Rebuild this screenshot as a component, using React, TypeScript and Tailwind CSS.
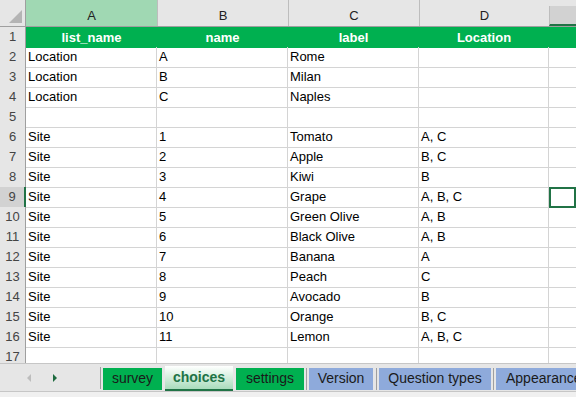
import React from 'react';

const rows: string[][] = [
  ['list_name', 'name', 'label', 'Location'],
  ['Location', 'A', 'Rome', ''],
  ['Location', 'B', 'Milan', ''],
  ['Location', 'C', 'Naples', ''],
  ['', '', '', ''],
  ['Site', '1', 'Tomato', 'A, C'],
  ['Site', '2', 'Apple', 'B, C'],
  ['Site', '3', 'Kiwi', 'B'],
  ['Site', '4', 'Grape', 'A, B, C'],
  ['Site', '5', 'Green Olive', 'A, B'],
  ['Site', '6', 'Black Olive', 'A, B'],
  ['Site', '7', 'Banana', 'A'],
  ['Site', '8', 'Peach', 'C'],
  ['Site', '9', 'Avocado', 'B'],
  ['Site', '10', 'Orange', 'B, C'],
  ['Site', '11', 'Lemon', 'A, B, C'],
  ['', '', '', ''],
];

const grid = 'grid grid-cols-[26px_131px_131px_131px_130px_1fr]';

function Tab({ label, tone, active, className }: { label: string; tone: 'green' | 'blue'; active?: boolean; className: string }) {
  if (active) {
    return (
      <div className={'flex h-[25px] shrink-0 items-center justify-center self-start whitespace-nowrap border-b-2 border-[#217346] bg-gradient-to-b from-white to-[#a9dcbc] text-[14px] font-bold text-[#217346] ' + className}>
        {label}
      </div>
    );
  }
  return (
    <div
      className={
        'flex h-[22px] shrink-0 items-center justify-center whitespace-nowrap text-[14px] text-[#1a1a1a] ' +
        (tone === 'green' ? 'bg-[#00b050] ' : 'bg-[#8eaadb] ') +
        className
      }
    >
      {label}
    </div>
  );
}

function Sep({ className }: { className: string }) {
  return <div className={'h-[22px] w-px shrink-0 bg-[#9f9f9f] ' + className} />;
}

export default function App() {
  return (
    <div className="flex h-[397px] w-[576px] flex-col overflow-hidden bg-white text-[13px] text-black" style={{ fontFamily: '"Liberation Sans", Arial, sans-serif' }}>
      <div className="flex-1 overflow-hidden">
        {/* column headers */}
        <div className={grid + ' h-[27px] border-b border-[#9f9f9f] bg-[#e6e6e6] text-[13px] text-[#222]'}>
          <div className="relative border-r border-[#9f9f9f]">
            <div className="absolute bottom-[3px] right-[3px] h-0 w-0 border-b-[13px] border-l-[13px] border-b-[#b4b4b4] border-l-transparent" />
          </div>
          <div className="flex items-center justify-center bg-[#a0d8b3] pt-[6px]">A</div>
          <div className="flex items-center justify-center border-l border-[#bdbdbd] pt-[6px]">B</div>
          <div className="flex items-center justify-center border-l border-[#bdbdbd] pt-[6px]">C</div>
          <div className="flex items-center justify-center border-l border-[#bdbdbd] pt-[6px]">D</div>
          <div className="mt-[6px] border-b-2 border-l border-[#217346] border-l-[#bdbdbd] bg-[#d2d2d2]" />
        </div>
        {rows.map((r, i) => {
          const n = i + 1;
          const header = n === 1;
          const sel = n === 9;
          return (
            <div key={n} className={grid + ' h-[20px]'}>
              <div
                className={
                  'flex items-center justify-center border-b border-[#c8c8c8] text-[#444] ' +
                  (sel ? 'border-r-2 border-r-[#217346] bg-[#d2d2d2]' : 'border-r border-r-[#9f9f9f] bg-[#e6e6e6]')
                }
              >
                {n}
              </div>
              {r.map((c, j) => (
                <div
                  key={j}
                  className={
                    header
                      ? 'flex items-center justify-center bg-[#00b050] font-bold text-white'
                      : 'flex items-center overflow-hidden whitespace-nowrap border-b border-r border-[#d4d4d4] pl-[2px]'
                  }
                >
                  {c}
                </div>
              ))}
              <div
                className={
                  header
                    ? 'bg-[#00b050]'
                    : sel
                    ? 'border-2 border-[#217346]'
                    : 'border-b border-[#d4d4d4]'
                }
              />
            </div>
          );
        })}
      </div>
      {/* sheet tabs */}
      <div className="h-[34px] border-t border-[#c6c6c6] bg-[#e6e6e6]">
        <div className="flex h-[28px] items-center border-b border-[#c6c6c6]">
          <div className="flex w-[100px] shrink-0 items-center gap-[22px] pl-[27px]">
            <div className="h-0 w-0 border-y-[4px] border-r-[4px] border-y-transparent border-r-[#bdbdbd]" />
            <div className="h-0 w-0 border-y-[4px] border-l-[4px] border-y-transparent border-l-[#1e6b3f]" />
          </div>
          <Sep className="" />
          <div className="flex items-center pt-[2px]">
            <Tab label="survey" tone="green" className="ml-[2px] w-[59px]" />
            <Tab label="choices" tone="green" active className="ml-[3px] w-[68px]" />
            <Tab label="settings" tone="green" className="ml-[3px] w-[68px]" />
            <Sep className="ml-[2px]" />
            <Tab label="Version" tone="blue" className="ml-[2px] w-[64px]" />
            <Sep className="ml-[3px]" />
            <Tab label="Question types" tone="blue" className="ml-[2px] w-[112px]" />
            <Sep className="ml-[2px]" />
            <Tab label="Appearance" tone="blue" className="ml-[2px] w-[90px] justify-start pl-[10px]" />
          </div>
        </div>
        <div className="h-[6px] bg-[#f0f0f0]" />
      </div>
    </div>
  );
}
